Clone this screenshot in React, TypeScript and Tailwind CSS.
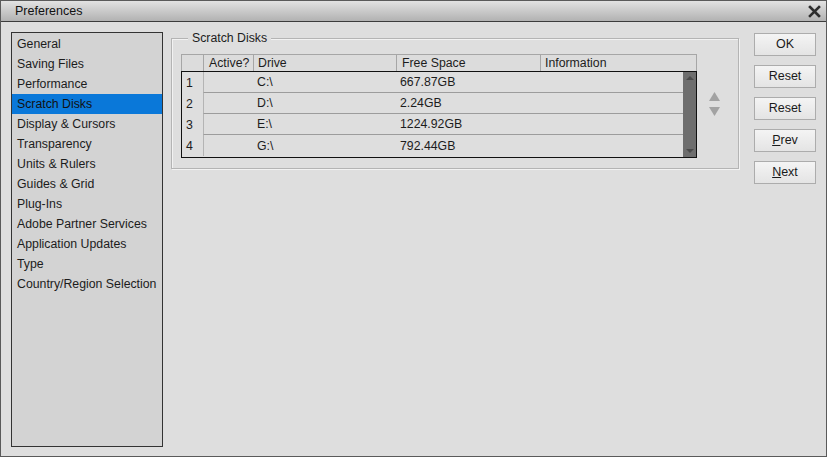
import React from "react";

const items = [
  "General",
  "Saving Files",
  "Performance",
  "Scratch Disks",
  "Display & Cursors",
  "Transparency",
  "Units & Rulers",
  "Guides & Grid",
  "Plug-Ins",
  "Adobe Partner Services",
  "Application Updates",
  "Type",
  "Country/Region Selection",
];

const rows = [
  ["1", "C:\\", "667.87GB"],
  ["2", "D:\\", "2.24GB"],
  ["3", "E:\\", "1224.92GB"],
  ["4", "G:\\", "792.44GB"],
];

function Btn({ children }: { children: React.ReactNode }) {
  return (
    <div className="w-[62px] h-[23px] flex items-center justify-center border border-[#acacac] bg-gradient-to-b from-[#f4f4f4] to-[#e4e4e4] text-[12.5px] text-[#1a1a1a]">
      {children}
    </div>
  );
}

export default function App() {
  return (
    <div
      className="w-[827px] h-[457px] flex flex-col bg-[#dedede] border border-[#5a5a5a] text-[12.3px] text-[#1c1c1c]"
      style={{ fontFamily: '"Liberation Sans", Arial, sans-serif' }}
    >
      <div className="h-[21px] shrink-0 flex items-center justify-between pl-[14px] pr-[5px] bg-gradient-to-b from-[#e2e2e2] to-[#b2b2b2] border-b border-[#3c3c3c]">
        <span className="text-[12.5px] text-[#111]">Preferences</span>
        <svg width="13" height="13" viewBox="0 0 13 13">
          <path d="M2 2 L11 11 M11 2 L2 11" stroke="#2e2e2e" strokeWidth="2.6" strokeLinecap="square" />
        </svg>
      </div>
      <div className="flex-1 flex pl-[10px] pt-[10px] pr-[10px] pb-[9px]">
        <div className="w-[152px] h-[415px] border border-[#333] bg-[#d3d3d3] pt-px">
          {items.map((it) => (
            <div
              key={it}
              className={
                "h-[20px] flex items-center pl-[5px] whitespace-nowrap " +
                (it === "Scratch Disks" ? "bg-[#0a78d9] text-[#111]" : "")
              }
            >
              {it}
            </div>
          ))}
        </div>
        <div className="ml-[8px] mt-[6px] w-[568px] h-[131px] relative border border-[#b4b4b4] shadow-[inset_1px_1px_0_#f2f2f2,1px_1px_0_#f2f2f2]">
          <span className="absolute left-[16px] top-[-8px] px-[4px] bg-[#dedede] leading-[15px]">Scratch Disks</span>
          <div className="flex mt-[15px] ml-[9px]">
            <div className="w-[516px]">
              <div className="flex h-[17px] border-t border-l border-r border-[#a6a6a6] bg-[#dcdcdc]">
                <div className="w-[22px] border-r border-[#a6a6a6]"></div>
                <div className="w-[50px] border-r border-[#a6a6a6] pl-[5px] leading-[16px]">Active?</div>
                <div className="w-[143px] border-r border-[#a6a6a6] pl-[4px] leading-[16px]">Drive</div>
                <div className="w-[144px] border-r border-[#a6a6a6] pl-[5px] leading-[16px]">Free Space</div>
                <div className="flex-1 pl-[4px] leading-[16px]">Information</div>
              </div>
              <div className="flex border-[1.5px] border-[#111] h-[87px]">
                <div className="flex-1 flex flex-col">
                  {rows.map((r, i) => (
                    <div key={r[0]} className="flex h-[21px]">
                      <div className="w-[21px] pl-[4px] flex items-center pt-px">{r[0]}</div>
                      <div
                        className={
                          "flex-1 flex border-l border-[#b4b4b4] " +
                          (i < 3 ? "border-b border-b-[#9c9c9c]" : "")
                        }
                      >
                        <div className="w-[50px]"></div>
                        <div className="w-[143px] pl-[3px] flex items-center pt-px">{r[1]}</div>
                        <div className="w-[144px] pl-[3px] flex items-center pt-px">{r[2]}</div>
                        <div className="flex-1"></div>
                      </div>
                    </div>
                  ))}
                </div>
                <div className="w-[13px] bg-[#6e6e6e] flex flex-col justify-between items-center py-[3px]">
                  <svg width="8" height="5" viewBox="0 0 8 5">
                    <path d="M0 5 L4 1 L8 5 Z" fill="#4a4a4a" />
                  </svg>
                  <svg width="8" height="5" viewBox="0 0 8 5">
                    <path d="M0 0 L4 4 L8 0 Z" fill="#4a4a4a" />
                  </svg>
                </div>
              </div>
            </div>
            <div className="ml-[12px] mt-[38px] flex flex-col gap-[6px]">
              <svg width="11" height="9" viewBox="0 0 11 9">
                <path d="M0 9 L5.5 0 L11 9 Z" fill="#a2a2a2" />
              </svg>
              <svg width="11" height="9" viewBox="0 0 11 9">
                <path d="M0 0 L5.5 9 L11 0 Z" fill="#a2a2a2" />
              </svg>
            </div>
          </div>
        </div>
        <div className="ml-auto mt-px flex flex-col gap-[9px]">
          <Btn>OK</Btn>
          <Btn>Reset</Btn>
          <Btn>Reset</Btn>
          <Btn>
            <span><span className="underline">P</span>rev</span>
          </Btn>
          <Btn>
            <span><span className="underline">N</span>ext</span>
          </Btn>
        </div>
      </div>
    </div>
  );
}
